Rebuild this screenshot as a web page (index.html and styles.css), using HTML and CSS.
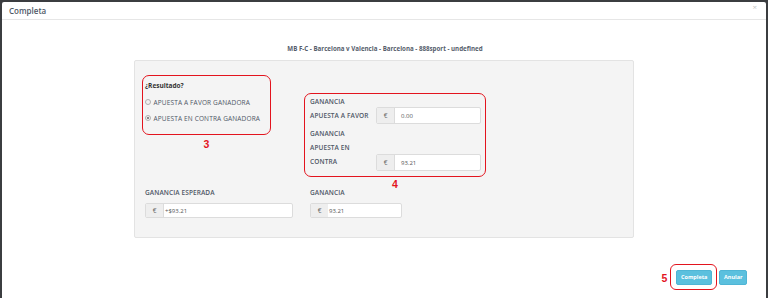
FILE: index.html
```html
<!DOCTYPE html>
<html lang="es">
<head>
<meta charset="utf-8">
<title>Completa</title>
<link rel="stylesheet" href="styles.css">
</head>
<body>
<div class="backdrop">
  <div class="modal">
    <div class="modal-header">
      <span class="modal-title">Completa</span>
      <span class="close">×</span>
    </div>
    <div class="modal-body">
      <h4 class="event">MB F-C - Barcelona v Valencia - Barcelona - 888sport - undefined</h4>
      <div class="panel">
        <div class="row-top">
          <div class="col-left">
            <div class="result-group">
              <div class="question">¿Resultado?</div>
              <label class="radio"><span class="radio-dot"></span>APUESTA A FAVOR GANADORA</label>
              <label class="radio"><span class="radio-dot checked"></span>APUESTA EN CONTRA GANADORA</label>
              <div class="mark mark-3"></div>
              <span class="num num-3">3</span>
            </div>
          </div>
          <div class="col-right">
            <div class="gain-group">
              <div class="field-title">GANANCIA</div>
              <div class="field-row">
                <span class="field-label">APUESTA A FAVOR</span>
                <div class="input-group wide"><span class="addon">€</span><span class="input-value padded">0.00</span></div>
              </div>
              <div class="field-title second">GANANCIA</div>
              <div class="field-row tall">
                <span class="field-label two-line">APUESTA EN<br>CONTRA</span>
                <div class="input-group wide low"><span class="addon">€</span><span class="input-value padded">93.21</span></div>
              </div>
              <div class="mark mark-4"></div>
              <span class="num num-4">4</span>
            </div>
          </div>
        </div>
        <div class="row-bottom">
          <div class="col-left">
            <div class="field-title">GANANCIA ESPERADA</div>
            <div class="input-group small expected"><span class="addon">€</span><span class="input-value">+$93.21</span></div>
          </div>
          <div class="col-right">
            <div class="field-title">GANANCIA</div>
            <div class="input-group small gain"><span class="addon narrow">€</span><span class="input-value">93.21</span></div>
          </div>
        </div>
      </div>
    </div>
    <div class="modal-footer">
      <div class="btn-wrap">
        <button class="btn">Completa</button>
        <div class="mark mark-5"></div>
        <span class="num num-5">5</span>
      </div>
      <button class="btn">Anular</button>
    </div>
  </div>
</div>
</body>
</html>
```

FILE: styles.css
```css
* { box-sizing: border-box; }
html, body {
  margin: 0;
  padding: 0;
  height: 100%;
  overflow: hidden;
}
body {
  background: #3b3d40;
  font-family: "Open Sans", "Liberation Sans", sans-serif;
  color: #4f5766;
}
.backdrop {
  padding: 2px 2px 0 2px;
  height: 100%;
}
.modal {
  background: #ffffff;
  height: 100%;
  border-radius: 2px 2px 0 0;
}
.modal-header {
  height: 18px;
  border-bottom: 1px solid #e6e6e6;
  display: flex;
  align-items: center;
  justify-content: space-between;
  padding: 0 9px 1px 7px;
}
.modal-title {
  font-size: 8px;
  font-weight: 600;
  color: #505866;
  line-height: 17px;
}
.close {
  font-size: 8px;
  color: #c4c4c4;
  line-height: 8px;
  margin-top: -6px;
}
.modal-body {
  padding-top: 24px;
}
.event {
  margin: 0 0 6px 0;
  font-size: 6.2px;
  line-height: 10px;
  font-weight: 700;
  text-align: center;
  color: #555d6b;
  padding-left: 2px;
}
.panel {
  width: 500px;
  margin: 0 auto;
  background: #f4f4f4;
  border: 1px solid #e3e3e3;
  border-radius: 2px;
  padding: 0 10px 19px 10px;
}
.row-top, .row-bottom {
  display: flex;
}
.row-bottom {
  margin-top: 17px;
}
.col-left {
  width: 165px;
  flex: none;
}
.col-right {
  flex: 1;
}
.result-group {
  position: relative;
  padding-top: 20px;
}
.question {
  font-size: 6.5px;
  line-height: 10px;
  font-weight: 700;
  color: #333;
}
.radio {
  display: flex;
  align-items: center;
  height: 16px;
  font-size: 6.5px;
  letter-spacing: 0.15px;
  color: #4f5766;
}
.radio:first-of-type {
  margin-top: 3px;
}
.radio-dot {
  width: 6px;
  height: 6px;
  border-radius: 50%;
  border: 1px solid #b0b0b0;
  background: #f2f2f2;
  margin-right: 2.5px;
  display: flex;
  align-items: center;
  justify-content: center;
}
.radio-dot.checked::after {
  content: "";
  width: 2px;
  height: 2px;
  border-radius: 50%;
  background: #666;
}
.gain-group {
  position: relative;
  padding-top: 36px;
}
.field-title {
  font-size: 6.5px;
  line-height: 10px;
  font-weight: 600;
  color: #4f5766;
  letter-spacing: 0.1px;
}
.field-title.second {
  margin-top: 5px;
}
.field-row {
  display: flex;
  align-items: center;
  height: 17px;
}
.field-row.tall {
  height: auto;
  align-items: flex-start;
  margin-top: 2px;
}
.field-label {
  width: 66px;
  flex: none;
  font-size: 6.5px;
  font-weight: 600;
  line-height: 10px;
  color: #4f5766;
  letter-spacing: 0.1px;
}
.field-label.two-line {
  line-height: 14px;
}
.input-group {
  display: flex;
  height: 17px;
  background: #fff;
  border: 1px solid #dcdcdc;
  border-radius: 2px;
  overflow: hidden;
}
.input-group.wide {
  width: 105px;
}
.input-group.low {
  margin-top: 13px;
}
.input-group.small {
  height: 15px;
  margin-top: 5px;
}
.input-group.expected {
  width: 148px;
}
.input-group.gain {
  width: 92px;
}
.addon {
  width: 18px;
  flex: none;
  background: #eeeeee;
  border-right: 1px solid #dcdcdc;
  font-size: 6.5px;
  color: #666;
  display: flex;
  align-items: center;
  justify-content: center;
}
.addon.narrow {
  width: 17px;
  border-right: none;
}
.input-value {
  font-size: 6px;
  color: #555;
  display: flex;
  align-items: center;
  padding-left: 1px;
}
.input-value.padded {
  padding-left: 6px;
}
.mark {
  position: absolute;
  border: 1.5px solid #e3141e;
  border-radius: 7px;
  pointer-events: none;
}
.num {
  position: absolute;
  color: #e3141e;
  font-family: "Liberation Sans", Arial, sans-serif;
  font-weight: 700;
  font-size: 10.5px;
  line-height: 10px;
  text-align: center;
}
.mark-3 {
  left: -3px;
  top: 14px;
  width: 129px;
  height: 60px;
}
.num-3 {
  left: -3px;
  width: 129px;
  top: 78px;
}
.mark-4 {
  left: -6px;
  top: 32px;
  width: 182px;
  height: 84px;
}
.num-4 {
  left: -6px;
  width: 182px;
  top: 118px;
}
.modal-footer {
  display: flex;
  justify-content: flex-end;
  gap: 7px;
  margin-top: 32px;
  padding-right: 19px;
}
.btn-wrap {
  position: relative;
  display: flex;
}
.btn {
  background: #5bc0de;
  border: 1px solid #4fb5d5;
  border-radius: 2px;
  color: #fff;
  font-family: "Open Sans", "Liberation Sans", sans-serif;
  font-size: 5.5px;
  font-weight: 700;
  height: 15px;
  padding: 0 4px;
  line-height: 13px;
}
.btn-wrap .btn {
  width: 36px;
}
.modal-footer > .btn {
  width: 28px;
}
.mark-5 {
  left: -6px;
  top: -6px;
  width: 47px;
  height: 26px;
  border-radius: 6px;
}
.num-5 {
  left: -16px;
  top: 3px;
  width: 9px;
}
```
